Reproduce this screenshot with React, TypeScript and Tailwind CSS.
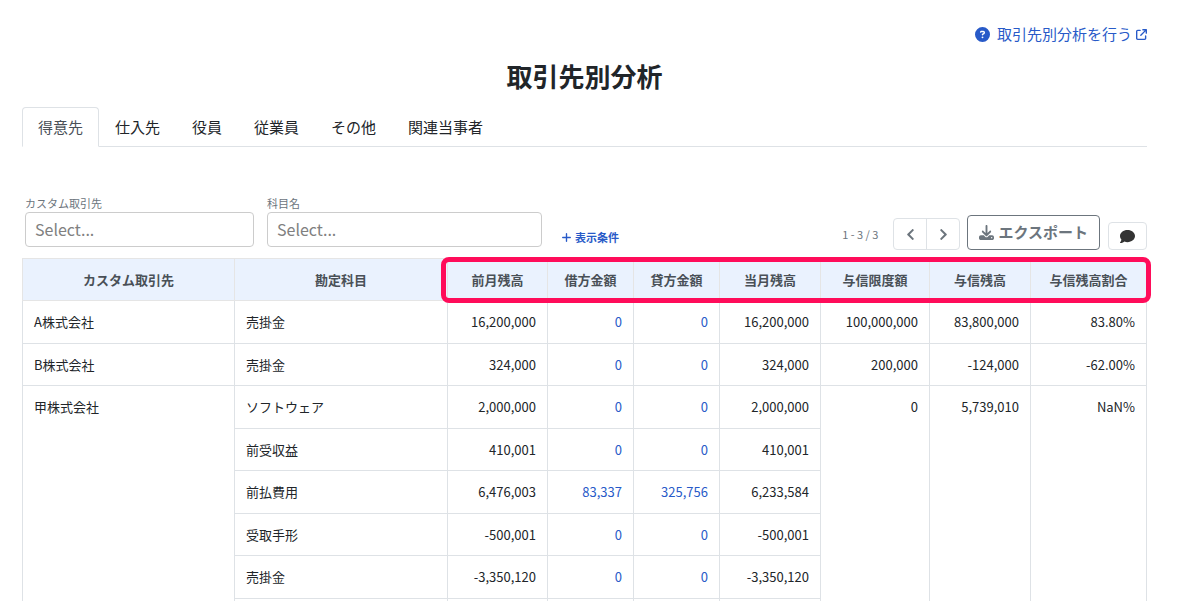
import React, { useState } from 'react';
import clsx from 'clsx';
import { FaChevronLeft, FaChevronRight } from 'react-icons/fa';
import {
  FaArrowUpRightFromSquare,
  FaCircleQuestion,
  FaComment,
  FaDownload,
  FaPlus
} from 'react-icons/fa6';

interface AccountRow {
  account: string;
  previous: string;
  debit: string;
  credit: string;
  current: string;
}

interface Partner {
  name: string;
  creditLimit: string;
  creditBalance: string;
  creditRatio: string;
  rows: AccountRow[];
}

const TABS = ['得意先', '仕入先', '役員', '従業員', 'その他', '関連当事者'];

const HEADERS = [
  'カスタム取引先',
  '勘定科目',
  '前月残高',
  '借方金額',
  '貸方金額',
  '当月残高',
  '与信限度額',
  '与信残高',
  '与信残高割合'
];

const PARTNERS: Partner[] = [
  {
    name: 'A株式会社',
    creditLimit: '100,000,000',
    creditBalance: '83,800,000',
    creditRatio: '83.80%',
    rows: [{ account: '売掛金', previous: '16,200,000', debit: '0', credit: '0', current: '16,200,000' }]
  },
  {
    name: 'B株式会社',
    creditLimit: '200,000',
    creditBalance: '-124,000',
    creditRatio: '-62.00%',
    rows: [{ account: '売掛金', previous: '324,000', debit: '0', credit: '0', current: '324,000' }]
  },
  {
    name: '甲株式会社',
    creditLimit: '0',
    creditBalance: '5,739,010',
    creditRatio: 'NaN%',
    rows: [
      { account: 'ソフトウェア', previous: '2,000,000', debit: '0', credit: '0', current: '2,000,000' },
      { account: '前受収益', previous: '410,001', debit: '0', credit: '0', current: '410,001' },
      { account: '前払費用', previous: '6,476,003', debit: '83,337', credit: '325,756', current: '6,233,584' },
      { account: '受取手形', previous: '-500,001', debit: '0', credit: '0', current: '-500,001' },
      { account: '売掛金', previous: '-3,350,120', debit: '0', credit: '0', current: '-3,350,120' },
      { account: '', previous: '', debit: '', credit: '', current: '' }
    ]
  }
];

interface CellProps {
  children: React.ReactNode;
  align?: 'left' | 'right';
  rowSpan?: number;
}

const Cell: React.FC<CellProps> = ({ children, align = 'left', rowSpan }) => (
  <td
    rowSpan={rowSpan}
    className={clsx(
      'border border-[#dee2e6] px-[11px] py-[11px] align-top',
      align === 'right' ? 'text-right' : 'text-left'
    )}
  >
    {children}
  </td>
);

const AmountLink: React.FC<{ value: string }> = ({ value }) => (
  <a href="#detail" className="text-[#285ac8]">
    {value}
  </a>
);

interface FilterFieldProps {
  id: string;
  label: string;
  className: string;
}

const FilterField: React.FC<FilterFieldProps> = ({ id, label, className }) => (
  <div className={clsx('flex flex-col', className)}>
    <label htmlFor={id} className="text-[11px] leading-4 text-[#6c757d]">
      {label}
    </label>
    <input
      id={id}
      type="text"
      placeholder="Select..."
      className="mt-px h-[35px] w-full rounded border border-[#cccccc] bg-white px-[9px] pb-0.5 text-base placeholder:text-[#808080]"
    />
  </div>
);

const Toolbar: React.FC = () => (
  <div className="mb-2 flex items-end justify-between pl-[3px]">
    <div className="flex items-end gap-[13px] pb-[3px]">
      <FilterField id="partner" label="カスタム取引先" className="w-[229px]" />
      <FilterField id="account" label="科目名" className="w-[275px]" />
      <button type="button" className="ml-1.5 flex items-center gap-[3px] text-[11px] leading-5 font-bold text-[#285ac8]">
        <FaPlus className="size-[11px]" />
        表示条件
      </button>
    </div>

    <div className="flex items-end">
      <span className="mr-[15px] text-[11px] leading-8 text-[#6c757d]">1 - 3 / 3</span>
      <div className="mr-[7px] flex h-8 rounded border border-[#dee2e6] text-[#6c757d]">
        <button type="button" aria-label="前へ" className="flex w-8 items-center justify-center">
          <FaChevronLeft className="size-[13px]" />
        </button>
        <button type="button" aria-label="次へ" className="flex w-[33px] items-center justify-center border-l border-[#dee2e6]">
          <FaChevronRight className="size-[13px]" />
        </button>
      </div>
      <button
        type="button"
        className="mr-2 flex h-[35px] items-center gap-1 rounded border border-[#6c757d] px-[11px] text-[15px] font-bold text-[#6c757d]"
      >
        <FaDownload className="size-[15px]" />
        エクスポート
      </button>
      <button
        type="button"
        aria-label="コメント"
        className="flex h-7 w-[39px] items-center justify-center rounded border border-[#dee2e6] text-[#333333]"
      >
        <FaComment className="size-[15px]" />
      </button>
    </div>
  </div>
);

const BalanceTable: React.FC = () => (
  <div className="relative">
    <table className="w-full table-fixed border-collapse text-[13px] leading-normal">
      <colgroup>
        <col className="w-[212px]" />
        <col />
        <col className="w-[100px]" />
        <col className="w-[86px]" />
        <col className="w-[86px]" />
        <col className="w-[101px]" />
        <col className="w-[109px]" />
        <col className="w-[101px]" />
        <col className="w-[116px]" />
      </colgroup>
      <thead>
        <tr className="bg-[#eaf2fe]">
          {HEADERS.map((header) => (
            <th key={header} scope="col" className="border border-[#e5e5e5] py-[11px] text-center leading-[19px] font-bold text-[#495057]">
              {header}
            </th>
          ))}
        </tr>
      </thead>
      <tbody>
        {PARTNERS.map((partner) =>
          partner.rows.map((row, i) => (
            <tr key={`${partner.name}-${i}`} className="h-[42px]">
              {i === 0 && <Cell rowSpan={partner.rows.length}>{partner.name}</Cell>}
              <Cell>{row.account}</Cell>
              <Cell align="right">{row.previous}</Cell>
              <Cell align="right"><AmountLink value={row.debit} /></Cell>
              <Cell align="right"><AmountLink value={row.credit} /></Cell>
              <Cell align="right">{row.current}</Cell>
              {i === 0 && (
                <>
                  <Cell align="right" rowSpan={partner.rows.length}>{partner.creditLimit}</Cell>
                  <Cell align="right" rowSpan={partner.rows.length}>{partner.creditBalance}</Cell>
                  <Cell align="right" rowSpan={partner.rows.length}>{partner.creditRatio}</Cell>
                </>
              )}
            </tr>
          ))
        )}
      </tbody>
    </table>

    {/* Highlight over the amount columns */}
    <div className="pointer-events-none absolute -top-px -right-1 h-[46px] w-[710px] rounded-lg border-5 border-[#ff0c5a]" />
  </div>
);

export default function App() {
  const [activeTab, setActiveTab] = useState(TABS[0]);

  return (
    <main className="h-screen overflow-hidden bg-white pt-[22px] pr-[39px] pl-[22px] font-['Noto_Sans_CJK_JP',sans-serif] text-[#212529]">
      <div className="flex justify-end">
        <a href="#help" className="flex items-center text-[15px] leading-6 text-[#285ac8]">
          <FaCircleQuestion className="mr-[7px] size-[15px]" />
          取引先別分析を行う
          <FaArrowUpRightFromSquare className="ml-1 size-[11px]" />
        </a>
      </div>

      <h1 className="mt-[10px] text-center text-[26px] leading-[39px] font-bold">取引先別分析</h1>

      <nav className="mt-3 flex border-b border-[#dee2e6]">
        {TABS.map((tab) => (
          <button
            key={tab}
            type="button"
            onClick={() => setActiveTab(tab)}
            className={clsx(
              '-mb-px h-10 rounded-t border px-[15px] text-[15px]',
              tab === activeTab
                ? 'border-[#dee2e6] border-b-white bg-white text-[#495057]'
                : 'border-transparent'
            )}
          >
            {tab}
          </button>
        ))}
      </nav>

      <div className="pt-12">
        <Toolbar />
        <BalanceTable />
      </div>
    </main>
  );
}
